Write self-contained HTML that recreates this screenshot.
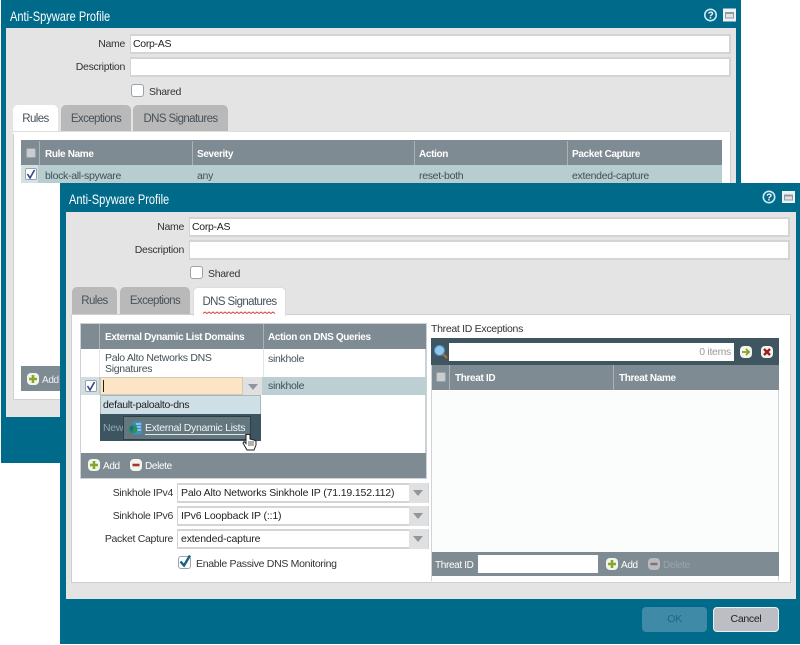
<!DOCTYPE html>
<html><head><meta charset="utf-8">
<style>
html,body{margin:0;padding:0;background:#fff}
#r{position:relative;width:800px;height:645px;overflow:hidden;background:#fff;font-family:"Liberation Sans",sans-serif;font-size:10.5px;letter-spacing:-.3px;color:#333;filter:blur(.3px)}
#r div,#r span.a{position:absolute;white-space:nowrap;box-sizing:border-box}
.teal{background:#006a8b}
.gray{background:#e4e4e4}
.title{color:#fff;font-size:14px;letter-spacing:0;line-height:18px;transform:scaleX(.79);transform-origin:0 0;font-weight:normal}
.lbl{text-align:right;line-height:14px;color:#333}
.inp{background:#fff;border:2px solid #d4d4d4;border-width:2px 2px 2px 1px;line-height:16px;padding-left:2px;color:#222}
.tab{background:#b9b9b9;border-radius:5px 5px 0 0;text-align:center;font-size:11.5px;letter-spacing:-.6px;color:#46525a;line-height:29px}
.tab.on{background:#fff;color:#46525a}
.hd{background:#7f8b92;}
.ht{color:#fff;font-weight:bold;line-height:16px;font-size:10px;letter-spacing:-.35px}
.t{line-height:14px;color:#3f5158}
.cb{background:#fff;border:1px solid #9aa4aa;border-radius:2px}
.sep{background:#a9b3b8;width:1px}
.dd{background:#e0e0e0}
.arr{width:0;height:0;border-left:5px solid transparent;border-right:5px solid transparent;border-top:6px solid #8e979d}
.pm{width:12px;height:12px;border-radius:4px;background:#f2f4ee}
</style></head><body><div id="r">

<!-- back dialog -->
<div class="teal" style="left:1px;top:0;width:740px;height:463px"></div>
<div class="title" style="left:10px;top:7px">Anti-Spyware Profile</div>
<svg style="position:absolute;left:702px;top:7px" width="36" height="16"><circle cx="8.500" cy="8" r="5.700" fill="#006a8b" stroke="#cfe9f2" stroke-width="1.600"/><text x="8.500" y="11.500" font-family="Liberation Sans" font-size="10" font-weight="bold" fill="#fff" text-anchor="middle">?</text><rect x="21" y="1.500" width="13" height="13" fill="#eef2f4"/><rect x="23" y="5" width="9" height="6.500" fill="#8f9ba1"/><rect x="24" y="7" width="7" height="3.500" fill="#dfe4e6"/></svg>
<div class="gray" style="left:6px;top:28px;width:730px;height:389px"></div>
<div class="lbl" style="left:60px;top:37px;width:65px">Name</div>
<div class="inp" style="left:130px;top:34px;width:601px;height:20px">Corp-AS</div>
<div class="lbl" style="left:60px;top:60px;width:65px">Description</div>
<div class="inp" style="left:130px;top:57px;width:601px;height:20px"></div>
<div class="cb" style="left:131px;top:84px;width:13px;height:13px;border-radius:3px"></div>
<div class="t" style="left:149px;top:85px;color:#333">Shared</div>
<div class="tab on" style="left:13px;top:105px;width:45px;height:28px">Rules</div>
<div class="tab" style="left:61px;top:105px;width:70px;height:27px">Exceptions</div>
<div class="tab" style="left:133px;top:105px;width:95px;height:27px">DNS Signatures</div>
<div style="left:13px;top:131px;width:718px;height:269px;background:#fff;border:1px solid #d0d0d0;border-top-color:#ddd"></div>
<div style="left:13px;top:132px;width:45px;height:2px;background:#fff"></div>
<div class="hd" style="left:21px;top:140px;width:701px;height:25px"></div>
<div class="sep" style="left:39px;top:141px;height:24px"></div>
<div class="sep" style="left:192px;top:141px;height:24px"></div>
<div class="sep" style="left:414px;top:141px;height:24px"></div>
<div class="sep" style="left:567px;top:141px;height:24px"></div>
<div class="cb" style="left:26px;top:148px;width:10px;height:10px;background:#c9cdd0"></div>
<div class="ht" style="left:45px;top:147px">Rule Name</div>
<div class="ht" style="left:197px;top:147px">Severity</div>
<div class="ht" style="left:419px;top:147px">Action</div>
<div class="ht" style="left:572px;top:147px">Packet Capture</div>
<div style="left:21px;top:165px;width:701px;height:18px;background:#b8cdd0"></div>
<div style="left:21px;top:165px;width:17px;height:18px;background:#d4e0e2"></div>
<div class="cb" style="left:25px;top:168px;width:12px;height:12px;color:#2b3f8f"></div>
<svg style="position:absolute;left:25px;top:168px" width="12" height="12"><path d="M2.500 6l2.500 4 4.500-8" fill="none" stroke="#33468f" stroke-width="1.600"/></svg>
<div class="t" style="left:45px;top:169px">block-all-spyware</div>
<div class="t" style="left:197px;top:169px">any</div>
<div class="t" style="left:419px;top:169px">reset-both</div>
<div class="t" style="left:572px;top:169px">extended-capture</div>
<div class="hd" style="left:21px;top:366px;width:40px;height:25px"></div>
<div class="pm" style="left:27px;top:373px"></div>
<svg style="position:absolute;left:27px;top:373px" width="12" height="12"><path d="M6 2v8M2 6h8" stroke="#86a82a" stroke-width="2.600"/></svg>
<div class="ht" style="left:42px;top:373px;font-weight:normal;color:#eef">Add</div>

<!-- front dialog -->
<div class="teal" style="left:60px;top:183px;width:740px;height:461px"></div>
<div class="title" style="left:69px;top:190px">Anti-Spyware Profile</div>
<svg style="position:absolute;left:761px;top:189px" width="36" height="16"><circle cx="8" cy="8" r="5.700" fill="#006a8b" stroke="#cfe9f2" stroke-width="1.600"/><text x="8" y="11.500" font-family="Liberation Sans" font-size="10" font-weight="bold" fill="#fff" text-anchor="middle">?</text><rect x="21" y="2" width="13" height="12" fill="#eef2f4"/><rect x="23" y="5.500" width="9" height="6" fill="#8f9ba1"/><rect x="24" y="7.500" width="7" height="3" fill="#dfe4e6"/></svg>
<div class="gray" style="left:66px;top:212px;width:730px;height:387px"></div>
<div class="lbl" style="left:119px;top:220px;width:65px">Name</div>
<div class="inp" style="left:189px;top:217px;width:601px;height:20px">Corp-AS</div>
<div class="lbl" style="left:119px;top:243px;width:65px">Description</div>
<div class="inp" style="left:189px;top:240px;width:601px;height:20px"></div>
<div class="cb" style="left:190px;top:266px;width:13px;height:13px;border-radius:3px"></div>
<div class="t" style="left:208px;top:267px;color:#333">Shared</div>
<div class="tab" style="left:72px;top:287px;width:45px;height:27px">Rules</div>
<div class="tab" style="left:120px;top:287px;width:70px;height:27px">Exceptions</div>
<div style="left:71px;top:314px;width:720px;height:269px;background:#fff;border:1px solid #cfcfcf"></div>
<div class="tab on" style="left:193px;top:287px;width:93px;height:29px;border:1px solid #ddd;border-bottom:0">DNS Signatures</div>
<svg style="position:absolute;left:203px;top:311px" width="74" height="4"><path d="M0 2.500l2-1.500 2 1.500 2-1.500 2 1.500 2-1.500 2 1.500 2-1.500 2 1.500 2-1.500 2 1.500 2-1.500 2 1.500 2-1.500 2 1.500 2-1.500 2 1.500 2-1.500 2 1.500 2-1.500 2 1.500 2-1.500 2 1.500 2-1.500 2 1.500 2-1.500 2 1.500 2-1.500 2 1.500 2-1.500 2 1.500 2-1.500 2 1.500 2-1.500 2 1.500 2-1.500 2 1.500" fill="none" stroke="#d8433a" stroke-width="1"/></svg>

<!-- left table -->
<div style="left:80px;top:323px;width:347px;height:156px;background:#fff;border:2px solid #ccd1d4;border-width:1px 2px 2px 1px"></div>
<div class="hd" style="left:81px;top:324px;width:345px;height:25px"></div>
<div class="sep" style="left:99px;top:324px;height:25px"></div>
<div class="sep" style="left:263px;top:324px;height:25px"></div>
<div class="ht" style="left:105px;top:330px">External Dynamic List Domains</div>
<div class="ht" style="left:268px;top:330px">Action on DNS Queries</div>
<div class="t" style="left:105px;top:353px;line-height:10.500px;white-space:normal;width:150px">Palo Alto Networks DNS<br>Signatures</div>
<div class="t" style="left:268px;top:352px">sinkhole</div>
<div style="left:263px;top:349px;width:1px;height:28px;background:#e2e6e8"></div>
<div style="left:99px;top:349px;width:1px;height:28px;background:#e2e6e8"></div>
<div style="left:81px;top:377px;width:345px;height:18px;background:#bccfd3"></div>
<div style="left:81px;top:377px;width:18px;height:18px;background:#d2dfe2"></div>
<div class="cb" style="left:85px;top:380px;width:12px;height:12px"></div>
<svg style="position:absolute;left:85px;top:380px" width="12" height="12"><path d="M2.500 6l2.500 4 4.500-8" fill="none" stroke="#33468f" stroke-width="1.600"/></svg>
<div style="left:100px;top:377px;width:143px;height:18px;background:#fbe5c4;border:1px solid #d4c9b4"></div>
<div style="left:103px;top:380px;width:1px;height:12px;background:#222"></div>
<div class="dd" style="left:243px;top:377px;width:19px;height:18px"></div>
<div class="arr" style="left:248px;top:384px"></div>
<div class="t" style="left:268px;top:379px">sinkhole</div>
<div style="left:100px;top:395px;width:161px;height:19px;background:#cfdfe6;border:1px solid #aab6bb;border-bottom:0"></div>
<div class="t" style="left:103px;top:398px;color:#222">default-paloalto-dns</div>
<div style="left:100px;top:414px;width:161px;height:27px;background:#3d5560"></div>
<div class="t" style="left:103px;top:421px;color:#8fa6ae">New</div>
<div style="left:123px;top:416px;width:128px;height:24px;background:#64777f;border:1px solid #2d3f47"></div>
<svg style="position:absolute;left:128px;top:421px" width="15" height="15"><rect x="5" y="0.500" width="9" height="13" fill="#3d8fc4"/><path d="M8 3h5M8 6h5M8 9h5" stroke="#dff1fb"/><circle cx="5" cy="8" r="4.500" fill="#2f8f5a"/><path d="M2 6c2-2 4 0 3 2s-2 2-2 4" fill="#1c5fa8"/></svg>
<div class="t" style="left:145px;top:422px;color:#eef4f6;border-bottom:1px solid #dfe8ec;line-height:12px">External Dynamic Lists</div>
<div class="hd" style="left:81px;top:453px;width:345px;height:25px"></div>
<div class="pm" style="left:88px;top:459px"></div>
<svg style="position:absolute;left:88px;top:459px" width="12" height="12"><path d="M6 2v8M2 6h8" stroke="#86a82a" stroke-width="2.600"/></svg>
<div class="ht" style="left:103px;top:459px;font-weight:normal">Add</div>
<div class="pm" style="left:130px;top:459px"></div>
<svg style="position:absolute;left:130px;top:459px" width="12" height="12"><path d="M2.500 6h7" stroke="#a8342e" stroke-width="2.600"/></svg>
<div class="ht" style="left:145px;top:459px;font-weight:normal">Delete</div>
<svg style="position:absolute;left:242px;top:433px" width="16" height="19"><path d="M4 1.500v9L2 8.500 1 10l4 7h7l2-5V8l-2-1-2-.5-2-.5V1.500z" fill="#fff" stroke="#222" stroke-width="1"/><path d="M7 8v5M9 8v5M11 8v5" stroke="#222" stroke-width=".7"/></svg>

<!-- selects -->
<div class="lbl" style="left:90px;top:486px;width:83px">Sinkhole IPv4</div>
<div class="inp" style="left:177px;top:483px;width:252px;height:20px;padding-left:3px;letter-spacing:-.15px">Palo Alto Networks Sinkhole IP (71.19.152.112)</div>
<div class="dd" style="left:409px;top:483px;width:19px;height:20px"></div><div class="arr" style="left:413px;top:490px"></div>
<div class="lbl" style="left:90px;top:509px;width:83px">Sinkhole IPv6</div>
<div class="inp" style="left:177px;top:506px;width:252px;height:20px;padding-left:3px;letter-spacing:-.15px">IPv6 Loopback IP (::1)</div>
<div class="dd" style="left:409px;top:506px;width:19px;height:20px"></div><div class="arr" style="left:413px;top:513px"></div>
<div class="lbl" style="left:90px;top:532px;width:83px">Packet Capture</div>
<div class="inp" style="left:177px;top:529px;width:252px;height:20px;padding-left:3px;letter-spacing:-.15px">extended-capture</div>
<div class="dd" style="left:409px;top:529px;width:19px;height:20px"></div><div class="arr" style="left:413px;top:536px"></div>
<div class="cb" style="left:178px;top:556px;width:13px;height:13px;border-radius:3px"></div>
<svg style="position:absolute;left:177px;top:553px" width="16" height="16"><path d="M3.500 8.500l3.500 4 6-10" fill="none" stroke="#13607f" stroke-width="2.400"/></svg>
<div class="t" style="left:196px;top:557px;color:#333">Enable Passive DNS Monitoring</div>

<!-- right table -->
<div style="left:431px;top:338px;width:348px;height:243px;background:#fbfcfc;border:1px solid #d0d4d6;border-width:0 1px 0 1px"></div>
<div class="t" style="left:431px;top:322px;color:#333">Threat ID Exceptions</div>
<div style="left:431px;top:338px;width:348px;height:27px;background:#3f5660"></div>
<svg style="position:absolute;left:433px;top:344px" width="16" height="16"><circle cx="6.500" cy="6.500" r="5" fill="#8ec6ec" stroke="#4e90c2"/><path d="M10 10l4 4" stroke="#a8742e" stroke-width="2.200"/></svg>
<div style="left:449px;top:343px;width:285px;height:18px;background:#fff;text-align:right;padding-right:3px;line-height:18px;color:#9a9a9a">0 items</div>
<div class="pm" style="left:740px;top:346px"></div>
<svg style="position:absolute;left:740px;top:346px" width="12" height="12"><path d="M2 6h7M6 3l3 3-3 3" fill="none" stroke="#86a02a" stroke-width="1.800"/></svg>
<div class="pm" style="left:761px;top:346px"></div>
<svg style="position:absolute;left:761px;top:346px" width="12" height="12"><path d="M3 3l6 6M9 3l-6 6" stroke="#9c1f1c" stroke-width="2.400"/></svg>
<div class="hd" style="left:432px;top:365px;width:347px;height:25px"></div>
<div class="sep" style="left:449px;top:365px;height:25px"></div>
<div class="sep" style="left:613px;top:365px;height:25px"></div>
<div class="cb" style="left:436px;top:372px;width:10px;height:10px;background:#c9cdd0"></div>
<div class="ht" style="left:455px;top:371px">Threat ID</div>
<div class="ht" style="left:619px;top:371px">Threat Name</div>
<div class="hd" style="left:432px;top:552px;width:347px;height:24px"></div>
<div class="ht" style="left:435px;top:558px;font-weight:normal">Threat ID</div>
<div style="left:478px;top:555px;width:120px;height:18px;background:#fff"></div>
<div class="pm" style="left:606px;top:558px"></div>
<svg style="position:absolute;left:606px;top:558px" width="12" height="12"><path d="M6 2v8M2 6h8" stroke="#86a82a" stroke-width="2.600"/></svg>
<div class="ht" style="left:621px;top:558px;font-weight:normal">Add</div>
<div class="pm" style="left:648px;top:558px;background:#b4bcc0"></div>
<svg style="position:absolute;left:648px;top:558px" width="12" height="12"><path d="M2.500 6h7" stroke="#8f6a6a" stroke-width="2.400"/></svg>
<div class="ht" style="left:663px;top:558px;font-weight:normal;color:#9aa4aa">Delete</div>

<!-- buttons -->
<div style="left:642px;top:607px;width:65px;height:25px;background:#3f8aa6;border-radius:4px;text-align:center;line-height:25px;color:#1f6680">OK</div>
<div style="left:713px;top:607px;width:66px;height:25px;background:#bcbec4;border:1px solid #e6f2f6;border-radius:4px;text-align:center;line-height:23px;color:#222">Cancel</div>
</div></body></html>
